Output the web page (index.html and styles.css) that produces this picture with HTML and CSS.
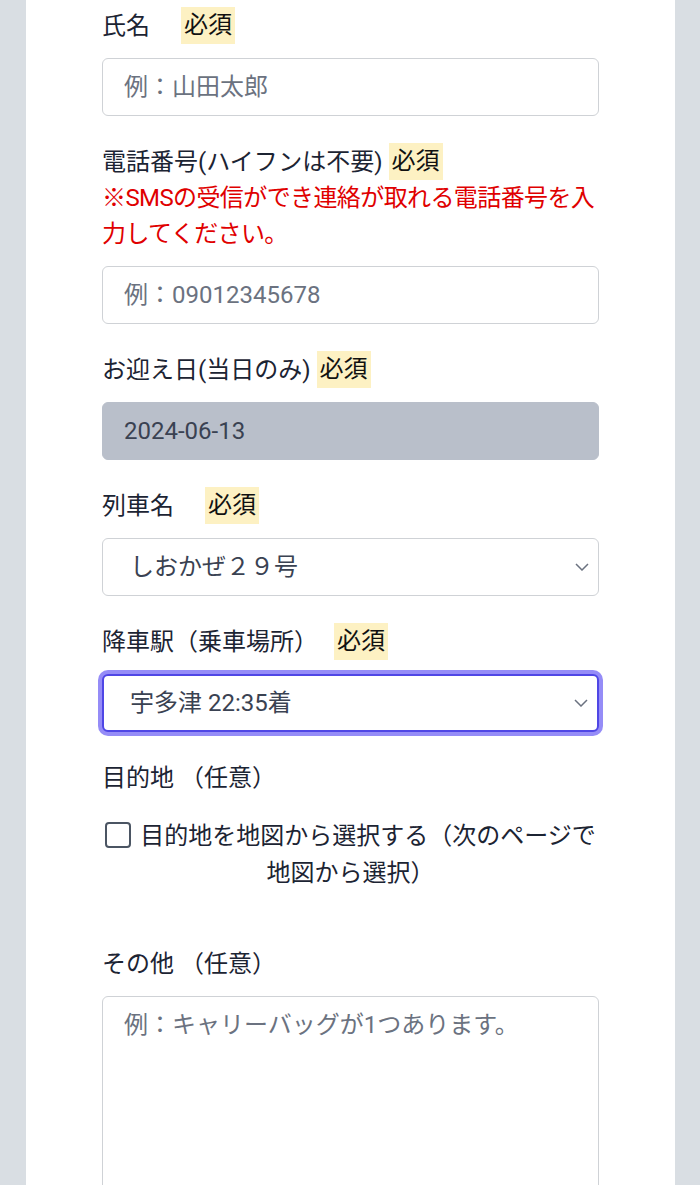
FILE: index.html
```html
<!DOCTYPE html>
<html lang="ja">
<head>
  <meta charset="utf-8">
  <title>お迎え予約</title>
  <link rel="stylesheet" href="styles.css">
</head>
<body>
  <div class="card">
    <form id="reserveForm">

      <div class="field">
        <div class="label-row">
          <label for="name">氏名</label>
          <span class="badge badge-wide">必須</span>
        </div>
        <input type="text" id="name" class="text-input" placeholder="例：山田太郎">
      </div>

      <div class="field">
        <div class="label-row">
          <label for="phone">電話番号(ハイフンは不要)</label>
          <span class="badge">必須</span>
        </div>
        <p class="note">※SMSの受信ができ連絡が取れる電話番号を入力してください。</p>
        <input type="text" id="phone" class="text-input" placeholder="例：09012345678">
      </div>

      <div class="field">
        <div class="label-row">
          <label for="date">お迎え日(当日のみ)</label>
          <span class="badge">必須</span>
        </div>
        <input type="text" id="date" class="text-input readonly" value="2024-06-13" readonly>
      </div>

      <div class="field">
        <div class="label-row">
          <label for="train">列車名</label>
          <span class="badge badge-wide">必須</span>
        </div>
        <select id="train" class="select-input">
          <option>しおかぜ２９号</option>
        </select>
      </div>

      <div class="field">
        <div class="label-row">
          <label for="station">降車駅（乗車場所）</label>
          <span class="badge badge-mid">必須</span>
        </div>
        <select id="station" class="select-input focused">
          <option>宇多津 22:35着</option>
        </select>
      </div>

      <div class="field field-map">
        <div class="label-row">
          <label>目的地 （任意）</label>
        </div>
        <label class="check-label">
          <input type="checkbox" id="useMap" class="check">
          目的地を地図から選択する（次のページで地図から選択）
        </label>
      </div>

      <div class="field">
        <div class="label-row">
          <label for="other">その他 （任意）</label>
        </div>
        <textarea id="other" class="text-area" placeholder="例：キャリーバッグが1つあります。"></textarea>
      </div>

    </form>
  </div>
</body>
</html>
```

FILE: styles.css
```css
body {
  margin: 0;
  background-color: #d9dee3;
  font-family: Roboto, "Noto Sans CJK JP", sans-serif;
  font-size: 24px;
  color: #1c2433;
}

.card {
  background-color: white;
  margin: 0 25px 0 26px;
  padding: 7px 76px 0 76px;
  min-height: 1185px;
  box-sizing: border-box;
}

.field {
  margin-bottom: 27px;
}

.label-row {
  display: flex;
  align-items: center;
  height: 37px;
  margin-bottom: 14px;
  line-height: 24px;
}

.badge {
  background-color: #fdf1c3;
  color: #111;
  padding: 6px 3px;
  margin-left: 6px;
  line-height: 25px;
}

.badge-wide {
  margin-left: 31px;
}

.badge-mid {
  margin-left: 16px;
}

.note {
  color: #e00000;
  margin: -14px 0 14px 0;
  line-height: 36px;
  letter-spacing: -0.6px;
}

.text-input,
.select-input,
.text-area {
  display: block;
  width: 100%;
  height: 58px;
  box-sizing: border-box;
  border: 1px solid #cfd2d6;
  border-radius: 6px;
  background-color: white;
  font-family: inherit;
  font-size: 24px;
  color: #374151;
  padding: 0 21px;
  outline: none;
}

.text-input::placeholder,
.text-area::placeholder {
  color: #6b7280;
}

.readonly {
  background-color: #b9bfca;
  border-color: #b9bfca;
  color: #3a4252;
}

.select-input {
  appearance: none;
  -webkit-appearance: none;
  padding-left: 27px;
  background-image: url("data:image/svg+xml;utf8,<svg xmlns='http://www.w3.org/2000/svg' width='14' height='8' viewBox='0 0 14 8'><path d='M1 1l6 6 6-6' fill='none' stroke='%236b7280' stroke-width='1.5'/></svg>");
  background-repeat: no-repeat;
  background-position: right 9px center;
  color: #3a4252;
}

.focused {
  border: 2px solid #4f46e5;
  padding-left: 26px;
  box-shadow: 0 0 0 4px #958cf7;
}

.field-map {
  margin-bottom: 53px;
}

.check-label {
  display: block;
  text-align: center;
  line-height: 37px;
  margin-top: 22px;
}

.check {
  appearance: none;
  -webkit-appearance: none;
  width: 26px;
  height: 26px;
  margin: 0 3px 0 0;
  border: 2px solid #4b5563;
  border-radius: 4px;
  background-color: white;
  vertical-align: -4px;
}

.text-area {
  height: 260px;
  padding: 12px 21px;
  line-height: 32px;
  resize: vertical;
}
```
